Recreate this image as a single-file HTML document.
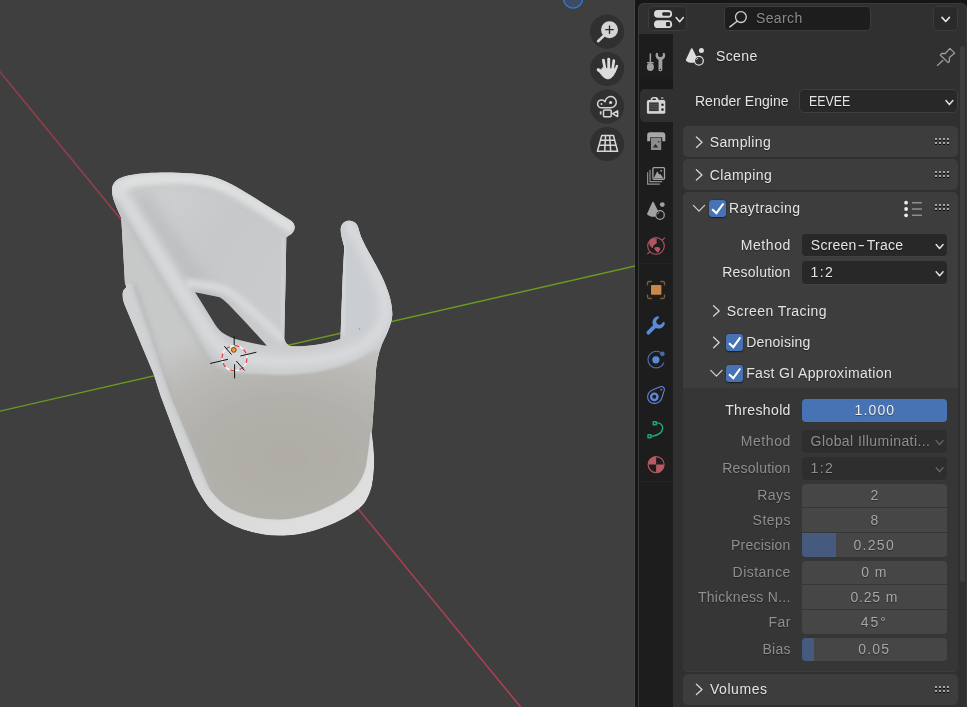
<!DOCTYPE html>
<html><head><meta charset="utf-8"><title>Blender</title>
<style>
html,body{margin:0;padding:0}
body{width:967px;height:707px;background:#161616;overflow:hidden;position:relative;font-family:"Liberation Sans",sans-serif;font-size:14px;color:#e4e4e4}
#vp{position:absolute;left:0;top:0;width:635px;height:707px;background:#3f3f3f;overflow:hidden;box-shadow:inset -1px 0 0 #484848}
#props{will-change:transform;position:absolute;left:638px;top:3px;width:329px;height:712px;background:#303030;border-radius:6px 6px 0 0;overflow:hidden;box-shadow:inset 0 0 0 1px #3a3a3a}
.abs{position:absolute}
.t{position:absolute;white-space:nowrap;line-height:16px;height:16px;text-shadow:0 1px 1px rgba(0,0,0,.4)}
.r{text-align:right}
.dis{color:#8f8f8f}
.panel{position:absolute;left:44px;width:275.5px;background:#3d3d3d;border-radius:5px}
.dd{position:absolute;background:#282828;border-radius:4px;box-shadow:0 1px 0 #414141}
.dd.off{background:#2e2e2e;box-shadow:0 1px 0 #393939}
.cb{position:absolute;border-radius:3px;background:#4772b3;box-shadow:0 0.5px 1.5px rgba(0,0,0,.55)}
.nf{position:absolute;left:163px;width:145.5px;background:#464646;color:#a8a8a8;text-align:center}
</style></head><body>
<div id="vp">
<svg class="abs" style="left:0;top:0" width="635" height="707" viewBox="0 0 635 707">
<defs>
<linearGradient id="gRed" gradientUnits="userSpaceOnUse" x1="0" y1="72" x2="520" y2="707"><stop offset="0" stop-color="#8f3c4a"/><stop offset="1" stop-color="#b64052"/></linearGradient>
<filter id="b1" x="-20%" y="-20%" width="140%" height="140%"><feGaussianBlur stdDeviation="1"/></filter>
<filter id="b2" x="-20%" y="-20%" width="140%" height="140%"><feGaussianBlur stdDeviation="2"/></filter>
<filter id="b3" x="-20%" y="-20%" width="140%" height="140%"><feGaussianBlur stdDeviation="3.5"/></filter>
<filter id="b6" x="-30%" y="-30%" width="160%" height="160%"><feGaussianBlur stdDeviation="7"/></filter>
<filter id="b12" x="-40%" y="-40%" width="180%" height="180%"><feGaussianBlur stdDeviation="14"/></filter>
<path id="sil" d="M112,191 C111.500,183 117,177.500 129,175.300 C148,171.200 188,172 205,175 C225,178.500 240,188.500 274,210 L290,220 C295.500,223 296.500,229.500 291.500,234 L286.300,237.300 L285.800,270 L284.200,338.500 C285,342 287,344.500 289.500,345.800 C300,347.500 322,345 340.400,339 L342.800,275 L344.300,247 C342,239 340.300,232.500 340.700,228.500 C341.500,222.500 346.500,220.200 351,221 C355.500,221.800 357.800,225 358.800,229.500 C361,240 369,252 378.500,270 C386,284 392.300,300 392.300,314 C392.300,322 388,332 382,344 C378,354 376,365 375.600,376 L374.200,400 L371.800,433 C374.800,452 375.200,470 371.800,486.500 C368.500,498.500 364,505 359.200,508.500 C346,519.500 326,527.500 309.500,532 C297,535 287,536 279.500,535.800 C266,535.500 256,533.500 247,530.800 C235.500,527.200 228,523.200 222,519.200 C214,513.500 208.500,507.500 204.800,502 C200,495 195.500,487.500 192.400,479.600 L175,435 L160,395 L153.500,374.600 L125.200,307 C122.200,300 121.300,293.500 123.300,290 L126,287 L125,284 L121.300,218 C116,206 112.300,198 112,191 Z"/>
<clipPath id="cSil"><use href="#sil"/></clipPath>
<clipPath id="cBody"><path d="M100,160 L410,160 L410,432 L370.400,432 C369.500,440 368.500,450 366.600,462 C365,472 362,480 354,489.500 C347,497 336,503 321.800,509.400 C310,514 296,519 279.500,519.400 C264,519.400 248,517 232,509.400 C224,505 218,500 210,489.500 L171,397 L133,284 L100,284 Z"/></clipPath>
<radialGradient id="gFront" gradientUnits="userSpaceOnUse" cx="0" cy="0" r="1" gradientTransform="translate(285 458) scale(205 135)"><stop offset="0" stop-color="#b0ada7"/><stop offset="0.45" stop-color="#b2b0aa"/><stop offset="0.72" stop-color="#bab9b5"/><stop offset="1" stop-color="#c7c8c8"/></radialGradient>
<linearGradient id="gBack" gradientUnits="userSpaceOnUse" x1="130" y1="200" x2="290" y2="300"><stop offset="0" stop-color="#cfd1d2"/><stop offset="0.5" stop-color="#c6c8ca"/><stop offset="1" stop-color="#c9cbcc"/></linearGradient>
<linearGradient id="gRim" gradientUnits="userSpaceOnUse" x1="130" y1="300" x2="290" y2="530"><stop offset="0" stop-color="#cfd1d2"/><stop offset="0.55" stop-color="#d2d3d4"/><stop offset="1" stop-color="#dedede"/></linearGradient>
<filter id="b05" x="-5%" y="-5%" width="110%" height="110%"><feGaussianBlur stdDeviation="0.45"/></filter>
</defs>
<!-- axes -->
<line x1="-2" y1="69.360" x2="522" y2="708.700" stroke="url(#gRed)" stroke-width="1.500"/>
<line x1="-2" y1="411.560" x2="637" y2="265.500" stroke="#6a9a22" stroke-width="1.400"/>
<!-- object -->
<g filter="url(#b05)"><g clip-path="url(#cSil)">
<use href="#sil" fill="url(#gRim)"/>
<path id="bodyIn" d="M100,160 L410,160 L410,432 L370.400,432 C369.500,440 368.500,450 366.600,462 C365,472 362,480 354,489.500 C347,497 336,503 321.800,509.400 C310,514 296,519 279.500,519.400 C264,519.400 248,517 232,509.400 C224,505 218,500 210,489.500 L171,397 L133,284 L100,284 Z" fill="#cbcdcf" filter="url(#b1)"/>
<!-- back wall inner face -->
<path d="M120,195 L150,183 L205,186 L235,198 L288,236 L286,345 L230,345 Z" fill="url(#gBack)"/>
<!-- crease right of near rim (shadow on inner face) -->
<path d="M142,198 L224,322" fill="none" stroke="#b9bcbf" stroke-width="14" stroke-linecap="round" filter="url(#b6)" opacity="0.95"/>
<!-- far inner bottom rim band -->
<path d="M186,283 C200,284 215,286 224,289.500 C232,293 238,298 244,304 L284,340" fill="none" stroke="#d6d8d9" stroke-width="9" filter="url(#b2)"/>
<!-- wall edge strip at gap -->
<path d="M283.500,238 L282,338" fill="none" stroke="#d0d2d3" stroke-width="2.500" filter="url(#b1)"/>
<!-- outer face + front body -->
<g clip-path="url(#cBody)"><path filter="url(#b1)" d="M108,186 L194.600,331.800 L204.800,349.400 C210,360 215,366 221.400,369.300 C230,372 238,373 246.200,373.400 L279.300,375 C300,375 318,372 328.900,369.300 C350,364 365,357 380,345 L400,330 L400,560 L100,560 Z" fill="url(#gFront)"/></g>
<!-- prong -->
<path d="M340,215 L362,215 L400,310 L380,350 L340,345 Z" fill="#cbced1" filter="url(#b2)"/>
<path d="M345,240 L342,335" fill="none" stroke="#d6d8da" stroke-width="5" filter="url(#b2)"/>
<!-- top rim -->
<path d="M118,194 C119,185 128,181.500 140,180 C160,177.500 190,178 204,181 C222,184.500 238,194 270,214.500 L289,226.500" fill="none" stroke="#dedfdf" stroke-width="11.500" stroke-linecap="round" filter="url(#b2)"/>
<path d="M128,197 C140,188 160,186 185,187 C210,188 228,194 245,205 L286,232" fill="none" stroke="#c0c3c5" stroke-width="2.500" filter="url(#b2)" opacity="0.6"/>
<!-- near rim tube -->
<path d="M118,190 L207,331 C216,346 228,355 250,359 C285,365 335,361 362,346 C385,331 390,312 382,290 C374,268 362,245 350,226" fill="none" stroke="#d7d9db" stroke-width="12" stroke-linecap="round" filter="url(#b3)"/>
<!-- crease left of near rim -->
<path d="M113,198 L195,336 C204,354 214,366 228,371" fill="none" stroke="#b9bbbd" stroke-width="3" filter="url(#b2)" opacity="0.85"/>
<!-- bottom rim -->
<path d="M134,284 L172,397 L211,489.500" fill="none" stroke="#b4b6b8" stroke-width="3" filter="url(#b2)" opacity="0.85"/>
</g></g>
<rect x="359" y="328.500" width="1.200" height="1" fill="#6a9a22"/>
<!-- hole -->
<path d="M195.200,292.300 L219.700,297.300 C224,300 227,303 229.600,305.600 L246.200,322.900 L266.900,345.800 C262,345 256,344 251.100,342.800 C245,341.500 239,340 234.600,338.700 C229,336.800 225,334.500 221.400,332 C218,329 215.500,325.500 213.100,321.300 Z" fill="#3f3f3f" filter="url(#b05)"/>
<!-- 3d cursor -->
<g fill="none">
<circle cx="234.500" cy="358.200" r="12.500" stroke="#fff" stroke-width="1.200"/>
<circle cx="234.500" cy="358.200" r="12.500" stroke="#f0303a" stroke-width="1.200" stroke-dasharray="4.909 4.909" stroke-dashoffset="0.300"/>
<g stroke="#151515" stroke-width="1">
<path d="M234.200,336.200 L234.200,345.300 M234.600,364.300 L234.600,378.400"/>
<path d="M210.100,363.500 L228,359.300 M240.400,356 L256.400,352.200"/>
<path d="M224.300,346.100 L231.600,354.700 M236.300,361 L244.500,370.400"/>
</g>
</g>
<circle cx="233.800" cy="349.900" r="2.400" fill="#f29a2e" stroke="#5a3a10" stroke-width="0.800"/>
<!-- nav gizmo -->
<circle cx="573.060" cy="-1.500" r="9.600" fill="#3d4c62" stroke="#2f7fd9" stroke-width="1.300"/>

<g fill="#303030">
<circle cx="607.100" cy="31.700" r="17.100"/><circle cx="607.100" cy="69" r="17.100"/><circle cx="607.100" cy="106.700" r="17.100"/><circle cx="607.100" cy="144" r="17.100"/>
</g>
<!-- zoom icon -->
<g>
<path d="M603.800,35.800 L598.100,41.200" stroke="#d6d6d6" stroke-width="2.600" stroke-linecap="round" fill="none"/>
<circle cx="609.500" cy="29.700" r="8.500" fill="#d4d4d4"/>
<path d="M605.300,29.700 H613.700 M609.500,25.500 V33.900" stroke="#2a2a2a" stroke-width="1.300" fill="none"/>
</g>
<!-- hand icon -->
<g transform="translate(607.100 69)" stroke="#dcdcdc" stroke-linecap="round" fill="none">
<path d="M-3.700,-8.800 L-2.200,-0.500" stroke-width="2.800"/>
<path d="M1.600,-9.800 L1.600,-0.500" stroke-width="2.900"/>
<path d="M6.700,-8.300 L5.600,-0.500" stroke-width="2.700"/>
<path d="M9.900,-3 L7.600,2.500" stroke-width="2.300"/>
<path d="M-8.800,0.800 L-3.600,4.200" stroke-width="3.200"/>
<path d="M-4.300,-1.200 C-1,-0.200 5,-0.200 8.300,-0.200 C9,3 5.500,9.800 1,9.900 C-2.500,9.900 -5.500,6.500 -7.500,3 Z" fill="#dcdcdc" stroke-width="0.800"/>
</g>
<!-- camera icon -->
<g transform="translate(607.100 107.500)" stroke="#d6d6d6" stroke-width="1.500" fill="none" stroke-linejoin="round">
<path d="M-5.600,0.300 A3.900,3.900 0 0 1 -5.600,-7.500 C-4,-7.500 -2.800,-6.800 -2,-5.700 A5.600,5.600 0 1 1 3.400,0.300 Z"/>
<circle cx="-5.600" cy="-3.600" r="1" fill="#d6d6d6" stroke="none"/>
<circle cx="3.500" cy="-5" r="1.600" fill="#d6d6d6" stroke="none"/>
<rect x="-3.600" y="2.600" width="7.700" height="6.600" rx="1"/>
<path d="M5.500,6.100 L10.500,3.300 V9.100 Z"/>
<rect x="-7.300" y="3.800" width="1.700" height="3.200" fill="#d6d6d6" stroke="none"/>
</g>
<!-- grid icon -->
<g transform="translate(607.100 144)" stroke="#d8d8d8" stroke-width="1.500" fill="none" stroke-linejoin="round">
<path d="M-5.300,-8.600 H6.300 L10.500,7.300 H-9.700 Z"/>
<path d="M-1.500,-8.600 L-2.400,7.300 M2.500,-8.600 L3.600,7.300 M-6.600,-3.800 H7.600 M-8.100,1.200 H8.900"/>
</g>


</svg>
</div>
<div id="props">
<div class="abs" style="left:9.60px;top:3.20px;width:39.80px;height:24.60px;background:#2a2a2a;border:1px solid #3c3c3c;border-radius:5px;box-sizing:border-box"></div>
<div class="abs" style="left:85.70px;top:3.00px;width:147.10px;height:24.60px;background:#1d1d1d;border:1px solid #3c3c3c;border-radius:5px;box-sizing:border-box"></div>
<div class="abs" style="left:295.10px;top:3.00px;width:25.00px;height:25.00px;background:#2a2a2a;border:1px solid #3c3c3c;border-radius:5px;box-sizing:border-box"></div>
<span class="t " style="top:7.35px;left:118.00px;letter-spacing:0.368px;color:#8a8a8a;">Search</span>
<div class="abs" style="left:1.00px;top:31.20px;width:34.00px;height:672.80px;background:#1d1d1d"></div>
<div class="abs" style="left:2.00px;top:85.90px;width:34.00px;height:33.20px;background:#303030;border-radius:5px 0 0 5px"></div>
<span class="t " style="top:45.45px;left:78.00px;letter-spacing:0.374px;">Scene</span>
<span class="t " style="top:89.85px;left:57.00px;letter-spacing:0.008px;">Render Engine</span>
<div class="dd" style="left:161.40px;top:86.30px;width:158.20px;height:24.20px;border:1px solid #3f3f3f;box-sizing:border-box;box-shadow:none;border-radius:5px"></div>
<span class="t " style="top:89.85px;left:170.90px;transform:scaleX(0.885);transform-origin:0 0;">EEVEE</span>
<div class="panel" style="left:45.10px;top:123.20px;width:275.30px;height:30.40px;"></div>
<div class="panel" style="left:45.10px;top:156.20px;width:275.30px;height:30.40px;"></div>
<div class="panel" style="left:45.10px;top:189.00px;width:275.30px;height:479.50px;"></div>
<div class="abs" style="left:45.10px;top:384.80px;width:275.30px;height:283.60px;background:#363636;border-radius:0 0 5px 5px"></div>
<div class="panel" style="left:45.10px;top:671.00px;width:275.30px;height:30.50px;"></div>
<div class="panel" style="left:45.10px;top:704.00px;width:275.30px;height:30.40px;"></div>
<span class="t " style="top:131.05px;left:71.70px;letter-spacing:0.389px;">Sampling</span>
<span class="t " style="top:163.75px;left:71.70px;letter-spacing:0.437px;">Clamping</span>
<span class="t " style="top:197.45px;left:91.10px;letter-spacing:0.442px;">Raytracing</span>
<span class="t " style="top:678.35px;left:72.00px;letter-spacing:0.549px;">Volumes</span>
<div class="cb" style="left:71.00px;top:197.00px;width:17.10px;height:17.20px;"></div>
<span class="t " style="top:234.05px;right:176.60px;letter-spacing:0.599px;margin-right:-0.599px;">Method</span>
<span class="t " style="top:260.85px;right:176.60px;letter-spacing:0.227px;margin-right:-0.227px;">Resolution</span>
<div class="dd" style="left:163.90px;top:230.80px;width:145.30px;height:22.70px;"></div>
<div class="dd" style="left:163.90px;top:258.10px;width:145.30px;height:22.60px;"></div>
<span class="t " style="top:234.05px;left:172.80px;letter-spacing:0.25px;">Screen<span style="display:inline-block;transform:scaleX(1.5);margin:0 2.6px">-</span>Trace</span>
<span class="t " style="top:260.85px;left:172.60px;letter-spacing:1.316px;">1:2</span>
<span class="t " style="top:299.85px;left:88.80px;letter-spacing:0.425px;">Screen Tracing</span>
<div class="cb" style="left:87.90px;top:330.90px;width:17.00px;height:17.00px;"></div>
<span class="t " style="top:330.95px;left:108.20px;letter-spacing:0.242px;">Denoising</span>
<div class="cb" style="left:87.90px;top:362.00px;width:17.00px;height:17.00px;"></div>
<span class="t " style="top:361.65px;left:108.20px;letter-spacing:0.349px;">Fast GI Approximation</span>
<span class="t " style="top:398.75px;right:176.60px;letter-spacing:0.367px;margin-right:-0.367px;">Threshold</span>
<div class="abs" style="left:163.90px;top:395.90px;width:145.40px;height:23.20px;background:#4772b3;border-radius:4px;text-align:center;box-shadow:0 1px 0 #353535"></div>
<span class="t " style="top:398.75px;left:136.90px;width:200px;text-align:center;letter-spacing:1.138px;color:#efefef;">1.000</span>
<span class="t dis" style="top:429.85px;right:176.60px;letter-spacing:0.599px;margin-right:-0.599px;">Method</span>
<span class="t dis" style="top:457.05px;right:176.60px;letter-spacing:0.227px;margin-right:-0.227px;">Resolution</span>
<div class="dd off" style="left:163.90px;top:426.80px;width:145.30px;height:23.00px;"></div>
<div class="dd off" style="left:163.90px;top:453.90px;width:145.30px;height:23.10px;"></div>
<span class="t dis" style="top:429.85px;left:172.60px;letter-spacing:0.427px;">Global Illuminati...</span>
<span class="t dis" style="top:457.05px;left:172.60px;letter-spacing:1.316px;">1:2</span>
<div class="abs" style="left:163.90px;top:481.10px;width:145.40px;height:22.70px;background:#464646;border-radius:4px 4px 0px 0px;overflow:hidden"></div>
<span class="t dis" style="top:483.75px;right:176.60px;letter-spacing:0.398px;margin-right:-0.398px;">Rays</span>
<span class="t " style="top:483.75px;left:136.30px;width:200px;text-align:center;color:#a6a6a6;">2</span>
<div class="abs" style="left:163.90px;top:504.70px;width:145.40px;height:24.30px;background:#464646;border-radius:0px 0px 0px 0px;overflow:hidden"></div>
<span class="t dis" style="top:508.85px;right:176.60px;letter-spacing:0.497px;margin-right:-0.497px;">Steps</span>
<span class="t " style="top:508.85px;left:136.30px;width:200px;text-align:center;color:#a6a6a6;">8</span>
<div class="abs" style="left:163.90px;top:529.90px;width:145.40px;height:23.80px;background:#464646;border-radius:0px 0px 4px 4px;overflow:hidden"><div style="position:absolute;left:0;top:0;height:100%;width:34.00px;background:#465a7e"></div></div>
<span class="t dis" style="top:533.85px;right:176.60px;letter-spacing:0.226px;margin-right:-0.226px;">Precision</span>
<span class="t " style="top:533.85px;left:136.30px;width:200px;text-align:center;letter-spacing:1.288px;color:#a6a6a6;">0.250</span>
<div class="abs" style="left:163.90px;top:557.80px;width:145.40px;height:23.00px;background:#464646;border-radius:4px 4px 0px 0px;overflow:hidden"></div>
<span class="t dis" style="top:560.75px;right:176.60px;letter-spacing:0.476px;margin-right:-0.476px;">Distance</span>
<span class="t " style="top:560.75px;left:136.30px;width:200px;text-align:center;letter-spacing:0.878px;color:#a6a6a6;">0 m</span>
<div class="abs" style="left:163.90px;top:581.70px;width:145.40px;height:24.10px;background:#464646;border-radius:0px 0px 0px 0px;overflow:hidden"></div>
<span class="t dis" style="top:585.75px;right:176.60px;letter-spacing:0.292px;margin-right:-0.292px;">Thickness N...</span>
<span class="t " style="top:585.75px;left:136.30px;width:200px;text-align:center;letter-spacing:0.798px;color:#a6a6a6;">0.25 m</span>
<div class="abs" style="left:163.90px;top:606.70px;width:145.40px;height:24.60px;background:#464646;border-radius:0px 0px 4px 4px;overflow:hidden"></div>
<span class="t dis" style="top:610.75px;right:176.60px;letter-spacing:0.450px;margin-right:-0.450px;">Far</span>
<span class="t " style="top:610.75px;left:136.30px;width:200px;text-align:center;letter-spacing:1.964px;color:#a6a6a6;">45°</span>
<div class="abs" style="left:163.90px;top:635.10px;width:145.40px;height:23.20px;background:#464646;border-radius:4px 4px 4px 4px;overflow:hidden"><div style="position:absolute;left:0;top:0;height:100%;width:11.90px;background:#465a7e"></div></div>
<span class="t dis" style="top:637.85px;right:176.60px;letter-spacing:0.189px;margin-right:-0.189px;">Bias</span>
<span class="t " style="top:637.85px;left:136.30px;width:200px;text-align:center;letter-spacing:1.217px;color:#a6a6a6;">0.05</span>
<div class="abs" style="left:322.20px;top:42.60px;width:4.80px;height:536.40px;background:#3f3f3f;border-radius:2.5px"></div>
<svg class="abs" style="left:0;top:0" width="329" height="704" viewBox="638 3 329 704"><path d="M942.00,17.40 L945.70,21.50 L949.40,17.40" fill="none" stroke="#e4e4e4" stroke-width="1.6" stroke-linecap="round" stroke-linejoin="round"/>
<path d="M676.10,17.60 L679.70,21.70 L683.30,17.60" fill="none" stroke="#e4e4e4" stroke-width="1.5" stroke-linecap="round" stroke-linejoin="round"/>
<path d="M945.95,100.60 L949.40,104.60 L952.85,100.60" fill="none" stroke="#e0e0e0" stroke-width="1.5" stroke-linecap="round" stroke-linejoin="round"/>
<path d="M936.15,244.50 L939.60,248.50 L943.05,244.50" fill="none" stroke="#e0e0e0" stroke-width="1.5" stroke-linecap="round" stroke-linejoin="round"/>
<path d="M936.15,271.70 L939.60,275.70 L943.05,271.70" fill="none" stroke="#e0e0e0" stroke-width="1.5" stroke-linecap="round" stroke-linejoin="round"/>
<path d="M936.15,440.60 L939.60,444.60 L943.05,440.60" fill="none" stroke="#6a6a6a" stroke-width="1.3" stroke-linecap="round" stroke-linejoin="round"/>
<path d="M936.15,467.70 L939.60,471.70 L943.05,467.70" fill="none" stroke="#6a6a6a" stroke-width="1.3" stroke-linecap="round" stroke-linejoin="round"/>
<path d="M696.40,137.00 L702.00,142.20 L696.40,147.40" fill="none" stroke="#d4d4d4" stroke-width="1.3" stroke-linecap="round" stroke-linejoin="round"/>
<path d="M696.40,169.70 L702.00,174.90 L696.40,180.10" fill="none" stroke="#d4d4d4" stroke-width="1.3" stroke-linecap="round" stroke-linejoin="round"/>
<path d="M696.40,684.20 L702.00,689.40 L696.40,694.60" fill="none" stroke="#d4d4d4" stroke-width="1.3" stroke-linecap="round" stroke-linejoin="round"/>
<path d="M693.40,205.30 L699.00,211.10 L704.60,205.30" fill="none" stroke="#d2d2d2" stroke-width="1.2" stroke-linecap="round" stroke-linejoin="round"/>
<path d="M713.60,305.70 L719.20,310.90 L713.60,316.10" fill="none" stroke="#d4d4d4" stroke-width="1.3" stroke-linecap="round" stroke-linejoin="round"/>
<path d="M713.60,337.30 L719.20,342.50 L713.60,347.70" fill="none" stroke="#d4d4d4" stroke-width="1.3" stroke-linecap="round" stroke-linejoin="round"/>
<path d="M710.80,370.30 L716.40,376.10 L722.00,370.30" fill="none" stroke="#d2d2d2" stroke-width="1.2" stroke-linecap="round" stroke-linejoin="round"/>
<path d="M712.10,209.30 L716.40,213.20 L723.40,203.50" fill="none" stroke="#fff" stroke-width="2.1" stroke-linecap="butt" stroke-linejoin="miter"/>
<path d="M729.00,343.20 L733.30,347.10 L740.30,337.40" fill="none" stroke="#fff" stroke-width="2.1" stroke-linecap="butt" stroke-linejoin="miter"/>
<path d="M729.00,374.30 L733.30,378.20 L740.30,368.50" fill="none" stroke="#fff" stroke-width="2.1" stroke-linecap="butt" stroke-linejoin="miter"/>
<rect x="935" y="138" width="2" height="2" fill="#a4a4a4"/><rect x="935" y="140" width="2" height="1" fill="#0a0a0a"/><rect x="939" y="138" width="2" height="2" fill="#a4a4a4"/><rect x="939" y="140" width="2" height="1" fill="#0a0a0a"/><rect x="943" y="138" width="2" height="2" fill="#a4a4a4"/><rect x="943" y="140" width="2" height="1" fill="#0a0a0a"/><rect x="947" y="138" width="2" height="2" fill="#a4a4a4"/><rect x="947" y="140" width="2" height="1" fill="#0a0a0a"/><rect x="935" y="142" width="2" height="2" fill="#a4a4a4"/><rect x="935" y="144" width="2" height="1" fill="#0a0a0a"/><rect x="939" y="142" width="2" height="2" fill="#a4a4a4"/><rect x="939" y="144" width="2" height="1" fill="#0a0a0a"/><rect x="943" y="142" width="2" height="2" fill="#a4a4a4"/><rect x="943" y="144" width="2" height="1" fill="#0a0a0a"/><rect x="947" y="142" width="2" height="2" fill="#a4a4a4"/><rect x="947" y="144" width="2" height="1" fill="#0a0a0a"/>
<rect x="935" y="171" width="2" height="2" fill="#a4a4a4"/><rect x="935" y="173" width="2" height="1" fill="#0a0a0a"/><rect x="939" y="171" width="2" height="2" fill="#a4a4a4"/><rect x="939" y="173" width="2" height="1" fill="#0a0a0a"/><rect x="943" y="171" width="2" height="2" fill="#a4a4a4"/><rect x="943" y="173" width="2" height="1" fill="#0a0a0a"/><rect x="947" y="171" width="2" height="2" fill="#a4a4a4"/><rect x="947" y="173" width="2" height="1" fill="#0a0a0a"/><rect x="935" y="175" width="2" height="2" fill="#a4a4a4"/><rect x="935" y="177" width="2" height="1" fill="#0a0a0a"/><rect x="939" y="175" width="2" height="2" fill="#a4a4a4"/><rect x="939" y="177" width="2" height="1" fill="#0a0a0a"/><rect x="943" y="175" width="2" height="2" fill="#a4a4a4"/><rect x="943" y="177" width="2" height="1" fill="#0a0a0a"/><rect x="947" y="175" width="2" height="2" fill="#a4a4a4"/><rect x="947" y="177" width="2" height="1" fill="#0a0a0a"/>
<rect x="935" y="204" width="2" height="2" fill="#a4a4a4"/><rect x="935" y="206" width="2" height="1" fill="#0a0a0a"/><rect x="939" y="204" width="2" height="2" fill="#a4a4a4"/><rect x="939" y="206" width="2" height="1" fill="#0a0a0a"/><rect x="943" y="204" width="2" height="2" fill="#a4a4a4"/><rect x="943" y="206" width="2" height="1" fill="#0a0a0a"/><rect x="947" y="204" width="2" height="2" fill="#a4a4a4"/><rect x="947" y="206" width="2" height="1" fill="#0a0a0a"/><rect x="935" y="208" width="2" height="2" fill="#a4a4a4"/><rect x="935" y="210" width="2" height="1" fill="#0a0a0a"/><rect x="939" y="208" width="2" height="2" fill="#a4a4a4"/><rect x="939" y="210" width="2" height="1" fill="#0a0a0a"/><rect x="943" y="208" width="2" height="2" fill="#a4a4a4"/><rect x="943" y="210" width="2" height="1" fill="#0a0a0a"/><rect x="947" y="208" width="2" height="2" fill="#a4a4a4"/><rect x="947" y="210" width="2" height="1" fill="#0a0a0a"/>
<rect x="935" y="686" width="2" height="2" fill="#a4a4a4"/><rect x="935" y="688" width="2" height="1" fill="#0a0a0a"/><rect x="939" y="686" width="2" height="2" fill="#a4a4a4"/><rect x="939" y="688" width="2" height="1" fill="#0a0a0a"/><rect x="943" y="686" width="2" height="2" fill="#a4a4a4"/><rect x="943" y="688" width="2" height="1" fill="#0a0a0a"/><rect x="947" y="686" width="2" height="2" fill="#a4a4a4"/><rect x="947" y="688" width="2" height="1" fill="#0a0a0a"/><rect x="935" y="690" width="2" height="2" fill="#a4a4a4"/><rect x="935" y="692" width="2" height="1" fill="#0a0a0a"/><rect x="939" y="690" width="2" height="2" fill="#a4a4a4"/><rect x="939" y="692" width="2" height="1" fill="#0a0a0a"/><rect x="943" y="690" width="2" height="2" fill="#a4a4a4"/><rect x="943" y="692" width="2" height="1" fill="#0a0a0a"/><rect x="947" y="690" width="2" height="2" fill="#a4a4a4"/><rect x="947" y="692" width="2" height="1" fill="#0a0a0a"/>
<circle cx="906.1" cy="202.7" r="1.9" fill="#ececec"/><rect x="911.9" y="201.89999999999998" width="10.1" height="1.6" rx="0.5" fill="#8e8e8e"/>
<circle cx="906.1" cy="209.0" r="1.9" fill="#ececec"/><rect x="911.9" y="208.2" width="10.1" height="1.6" rx="0.5" fill="#8e8e8e"/>
<circle cx="906.1" cy="215.3" r="1.9" fill="#ececec"/><rect x="911.9" y="214.5" width="10.1" height="1.6" rx="0.5" fill="#8e8e8e"/>
<circle cx="740.9" cy="17.1" r="5.4" fill="none" stroke="#d0d0d0" stroke-width="1.3"/><path d="M737.1,21.2 L729.9,26.9" stroke="#d0d0d0" stroke-width="1.4" stroke-linecap="round"/>
<rect x="654" y="10.1" width="18.1" height="7.6" rx="3.8" fill="#d9d9d9"/><rect x="662.3" y="12.2" width="7.8" height="3.6" rx="1" fill="#2a2a2a"/>
<rect x="654" y="20.3" width="18.1" height="7.8" rx="3.9" fill="#d9d9d9"/><rect x="666.0" y="22.0" width="4.1" height="4.2" rx="1" fill="#2a2a2a"/>
<!-- tab separators -->
<rect x="640" y="79" width="33" height="9.8" fill="#1a1a1a"/>
<rect x="640" y="263" width="33" height="1" fill="#242424"/>
<rect x="640" y="481" width="33" height="1" fill="#242424"/>
<!-- tool tab icon -->
<g fill="#9f9f9f">
<rect x="649.600" y="53.200" width="1.500" height="9" rx="0.600"/>
<rect x="646.900" y="61.900" width="6.900" height="1.300" rx="0.500"/>
<ellipse cx="650.350" cy="67" rx="3.500" ry="4"/>
<path d="M658.500,59.800 L658.500,69.400 A1.900,1.900 0 0 0 662.300,69.400 L662.300,59.800 C664.200,58.900 665.200,57.300 665.200,55.300 C665.200,54.200 664.700,53.300 664.100,52.700 L662.700,53.300 C663,54 663,55 662.600,55.800 C662.200,56.600 661.400,57.100 660.400,57.100 C659.400,57.100 658.600,56.600 658.200,55.800 C657.800,55 657.800,54 658.100,53.300 L656.700,52.700 C656.100,53.300 655.600,54.200 655.600,55.300 C655.600,57.300 656.600,58.900 658.500,59.800 Z"/>
</g>
<circle cx="660.400" cy="69.400" r="0.700" fill="#1d1d1d"/>
<!-- render tab icon (active) -->
<g>
<path d="M650.500,100.600 C650.500,98.300 651.700,97 653.400,97 H655.700 C657.400,97 658.600,98.300 658.600,100.600 Z" fill="#d4d4d4"/>
<rect x="652.300" y="98.600" width="3.700" height="1.900" rx="0.900" fill="#2c2c2c"/>
<rect x="661.100" y="97.200" width="2.200" height="1.700" fill="#a0a0a0"/>
<rect x="646.900" y="100.100" width="18.400" height="13.700" rx="1.600" fill="#d4d4d4"/>
<rect x="649.100" y="102.400" width="9.600" height="8.700" fill="#3a3a3a"/>
<path d="M649.800,104.800 H658 M649.800,106.800 H658 M649.800,108.800 H658" stroke="#6a6a6a" stroke-width="0.600"/>
<circle cx="662.500" cy="104.700" r="1.300" fill="#2c2c2c"/><circle cx="662.500" cy="109.600" r="1.300" fill="#2c2c2c"/>
</g>
<!-- output tab icon -->
<g>
<path d="M647.200,141.300 V135 C647.200,133.300 648.300,132.300 650,132.300 H662.500 C664.200,132.300 665.300,133.300 665.300,135 V141.300 H662.300 V137.300 H650.200 V141.300 Z" fill="#a8a8a8"/>
<rect x="651" y="137.800" width="10.200" height="12.200" fill="#8c8c8c"/>
<path d="M652.800,147.400 L655.500,144 L658.200,147.400 Z" fill="#262626"/>
<circle cx="658.800" cy="141.800" r="0.800" fill="#262626"/>
</g>
<!-- view layer tab icon -->
<g fill="none" stroke="#8f8f8f">
<path d="M650,169.800 V181.700 H662.200" stroke-width="1.200"/>
<path d="M647.600,172.300 V184.200 H659.800" stroke-width="1.200"/>
<rect x="652.900" y="167.700" width="11.600" height="11.600" rx="1" stroke-width="1.300" stroke="#a2a2a2"/>
<path d="M653.600,178.600 L657.300,171.200 L659.300,174.800 L660.200,173.800 L663.600,178.600 Z" fill="#a2a2a2" stroke="none"/>
<rect x="660.400" y="170" width="1.600" height="1.600" fill="#a2a2a2" stroke="none"/>
</g>
<!-- scene tab icon -->
<g fill="#a2a2a2">
<path d="M652.300,202.200 C653,201.600 653.600,201.800 654,202.700 L658.200,211.200 C656.200,212.400 655.300,214.600 655.500,216.600 C652.500,217.300 649.500,216.500 647.500,214.800 C647,214.400 647,213.800 647.300,213.200 Z"/>
<circle cx="662.300" cy="204.600" r="2.400"/>
<circle cx="660" cy="215" r="4.300" fill="none" stroke="#a2a2a2" stroke-width="1.200"/>
<path d="M657.600,214.200 A2.600,2.600 0 0 1 659.300,212.400" fill="none" stroke="#a2a2a2" stroke-width="0.900"/>
</g>
<!-- world tab icon -->
<g fill="none" stroke="#b25462" stroke-width="1.100">
<circle cx="656" cy="245.900" r="8.300"/>
<path d="M647.300,254.200 L650,251.700 M662.200,240.200 L664.900,237.600"/>
<path d="M650,240.300 C651.800,238.400 654.600,238 656.800,238.800 C656.600,240.200 656.200,241.400 657,242.400 C656.400,243.800 654.800,244.200 653.800,245.200 C653,246.200 653.400,247.400 652.600,248 C651,247.600 650,246 649.400,244.600 C649,243 649.300,241.500 650,240.300 Z" fill="#b25462" stroke="none"/>
<path d="M654.200,247.800 C656,246.600 658.600,246.800 660.200,248 C660.400,249.800 659.400,251.600 657.800,252.400 C656.600,252.200 656,250.800 655.200,250 C654.500,249.400 654,248.600 654.200,247.800 Z" fill="#b25462" stroke="none"/>
</g>
<!-- object tab icon -->
<g>
<rect x="651" y="285.100" width="10.400" height="9.700" rx="0.800" fill="#c98748"/>
<path d="M647.500,285.500 V283 C647.500,282 648.100,281.500 649,281.500 H651.800 M660.200,281.500 H663 C663.900,281.500 664.500,282 664.500,283 V285.500 M664.500,294.500 V297 C664.500,298 663.900,298.500 663,298.500 H660.200 M651.800,298.500 H649 C648.100,298.500 647.500,298 647.500,297 V294.500" fill="none" stroke="#7f5c38" stroke-width="1.300"/>
</g>
<!-- modifier tab icon (wrench) -->
<g transform="translate(656 325) rotate(45)" fill="#5a8ad8">
<path d="M-1.900,2.200 L-1.900,10.800 A1.900,1.900 0 0 0 1.900,10.800 L1.900,2.200 C4.600,1.300 6.200,-1.200 6.200,-3.800 C6.200,-5.600 5.500,-7 4.500,-8 L2.600,-7 C3.200,-6 3.300,-4.600 2.800,-3.500 C2.300,-2.400 1.300,-1.700 0,-1.700 C-1.300,-1.700 -2.300,-2.400 -2.800,-3.500 C-3.300,-4.600 -3.200,-6 -2.600,-7 L-4.500,-8 C-5.500,-7 -6.200,-5.600 -6.200,-3.800 C-6.200,-1.200 -4.600,1.300 -1.900,2.200 Z"/>
</g>
<!-- particles tab icon -->
<g>
<circle cx="655.900" cy="359.800" r="3.600" fill="#5a8ad8"/>
<path d="M660.200,352.300 A8.300,8.300 0 1 0 664,362.500" fill="none" stroke="#4c72b4" stroke-width="1.100"/>
<circle cx="662.300" cy="353.800" r="2.400" fill="#486aa6"/>
</g>
<!-- physics tab icon -->
<g fill="none" stroke="#6286d8">
<path d="M647.600,397 C647.600,393.200 650.300,390.800 653.500,389.600 L660.300,386.800 C662.700,385.900 664.900,387.700 664.300,390.200 L662.300,396.700 C661.300,400.800 658.300,403.400 654.400,403.400 C650.500,403.400 647.600,400.600 647.600,397 Z" stroke-width="1.100"/>
<circle cx="654.300" cy="396.800" r="3.200" stroke-width="2.400"/>
<circle cx="661.300" cy="389.700" r="0.900" fill="#6286d8" stroke="none"/>
</g>
<!-- constraints tab icon -->
<g fill="none" stroke="#1fae87" stroke-width="1.300">
<path d="M656.500,423 C664,422 667,434 651.500,436.400"/>
<rect x="653" y="421.600" width="3.400" height="3.400" fill="#1fae87" stroke-width="0.800"/>
<rect x="647.800" y="434.600" width="3.400" height="3.400" fill="#1fae87" stroke-width="0.800"/>
</g>
<rect x="653.900" y="422.500" width="1.600" height="1.600" fill="#1d1d1d"/><rect x="648.700" y="435.500" width="1.600" height="1.600" fill="#1d1d1d"/>
<!-- material tab icon -->
<g>
<circle cx="656.100" cy="464.600" r="8" fill="#1d1d1d" stroke="#b85a63" stroke-width="1.100"/>
<path d="M656.100,464.600 L656.100,456.600 A8,8 0 0 0 648.100,464.600 Z" fill="#b85a63"/>
<path d="M656.100,464.600 L656.100,472.600 A8,8 0 0 0 664.100,464.600 Z" fill="#b85a63"/>
</g>
<!-- scene header icon -->
<g fill="#dedede">
<path d="M691,48.700 C691.700,48.100 692.400,48.300 692.800,49.200 L696.800,57.400 C694.900,58.500 694.100,60.500 694.200,62.600 C691.400,63.300 688.300,62.600 686.300,60.900 C685.800,60.500 685.800,59.900 686.100,59.300 Z"/>
<circle cx="701.400" cy="50.600" r="2.500"/>
<circle cx="698.900" cy="60.700" r="4.400" fill="none" stroke="#dedede" stroke-width="1.300"/>
<path d="M696.500,59.900 A2.600,2.600 0 0 1 698.200,58.100" fill="none" stroke="#dedede" stroke-width="0.900"/>
</g>
<g fill="none" stroke="#9c9c9c" stroke-width="1.300" stroke-linejoin="round" stroke-linecap="round">
<path d="M949.900,48.400 L954.700,53.100 L949.400,57.600 L949.400,61.400 L948.100,62.600 L940.300,55 L941.800,53.500 L945.300,53.500 Z"/>
<path d="M942.800,60.400 L937.400,65.400"/>
</g>
</svg>
</div>
</body></html>
